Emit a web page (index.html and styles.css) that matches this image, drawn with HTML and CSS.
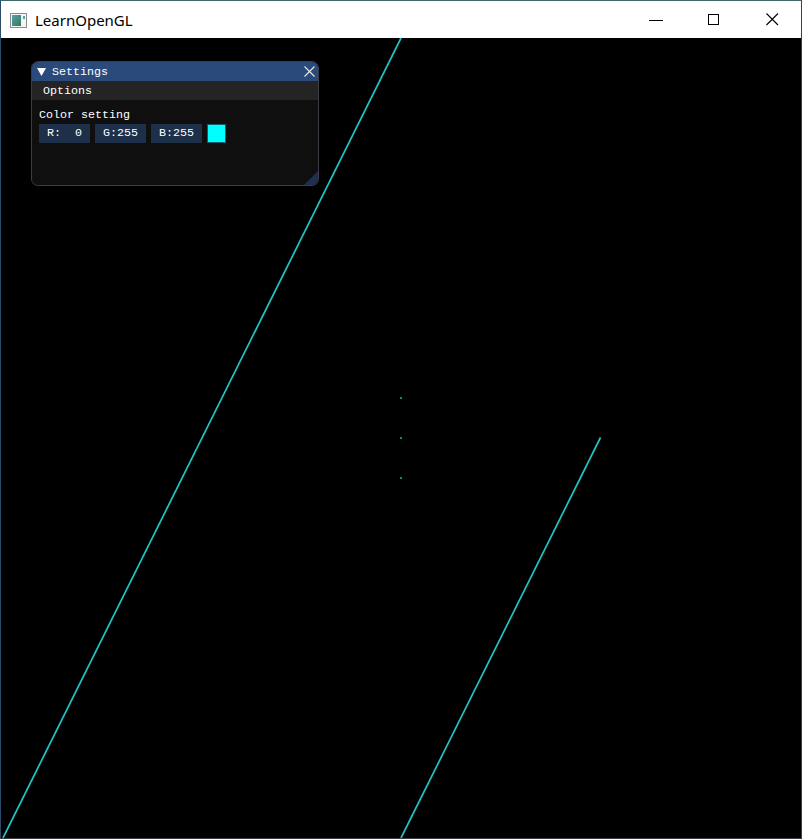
FILE: index.html
```html
<!DOCTYPE html>
<html>
<head>
<meta charset="utf-8">
<link rel="stylesheet" href="styles.css">
</head>
<body>
<div class="frame">
  <div class="titlebar">
    <svg class="app-icon" width="17" height="15" viewBox="0 0 17 15">
      <rect x="0.5" y="0.5" width="16" height="14" fill="#f4f4f4" stroke="#8c8c8c"/>
      <defs><linearGradient id="g" x1="0" y1="0" x2="1" y2="1"><stop offset="0" stop-color="#5aa0b0"/><stop offset="1" stop-color="#2f7a50"/></linearGradient></defs>
      <rect x="2" y="2" width="9" height="11" fill="url(#g)"/>
      <rect x="13" y="3" width="2" height="3" fill="#5aa0b0"/>
    </svg>
    <span class="title">LearnOpenGL</span>
    <div class="controls">
      <div class="ctl"><svg width="14" height="14" viewBox="0 0 14 14"><line x1="0" y1="7.5" x2="14" y2="7.5" stroke="#000" stroke-width="1"/></svg></div>
      <div class="ctl"><svg width="12" height="12" viewBox="0 0 12 12"><rect x="0.5" y="0.5" width="10" height="10" fill="none" stroke="#000" stroke-width="1"/></svg></div>
      <div class="ctl"><svg width="13" height="13" viewBox="0 0 13 13"><path d="M0.5 0.5 L12 12 M12 0.5 L0.5 12" stroke="#000" stroke-width="1.1" fill="none"/></svg></div>
    </div>
  </div>
  <div class="client">
    <svg class="gl" width="800" height="800" viewBox="0 0 800 800">
      <line x1="400" y1="0" x2="2" y2="800" stroke="#1fc6c6" stroke-width="1.7"/>
      <line x1="599.5" y1="399.5" x2="400" y2="800" stroke="#1fc6c6" stroke-width="1.7"/>
      <rect x="399" y="359" width="2" height="2" fill="#0b8a8a"/>
      <rect x="399" y="399" width="2" height="2" fill="#0b8a8a"/>
      <rect x="399" y="439" width="2" height="2" fill="#0b8a8a"/>
    </svg>
    <div class="imgui">
      <div class="im-title">
        <svg class="tri" width="9" height="8" viewBox="0 0 9 8"><polygon points="0,0 9,0 4.5,8" fill="#fff"/></svg>
        <span class="im-name">Settings</span>
        <svg class="im-close" width="11" height="11" viewBox="0 0 11 11"><path d="M0.5 0.5 L10.5 10.5 M10.5 0.5 L0.5 10.5" stroke="#e8e8e8" stroke-width="1.1"/></svg>
      </div>
      <div class="im-menu"><span class="menu-item">Options</span></div>
      <div class="im-body">
        <div class="label">Color setting</div>
        <div class="row">
          <div class="btn">R:&nbsp;&nbsp;0</div>
          <div class="btn">G:255</div>
          <div class="btn">B:255</div>
          <div class="swatch"></div>
        </div>
      </div>
      <div class="grip"></div>
    </div>
  </div>
</div>
</body>
</html>
```
FILE: styles.css
```css
html, body {
  margin: 0;
  padding: 0;
  background: #000;
}
.frame {
  width: 800px;
  height: 837px;
  border: 1px solid #3a3f4a;
  border-left-color: #2b4a6a;
  border-top-color: #3a6a6a;
  background: #000;
  display: flex;
  flex-direction: column;
}
.titlebar {
  height: 37px;
  background: #fff;
  display: flex;
  align-items: center;
  flex-shrink: 0;
}
.app-icon {
  margin-left: 9px;
  margin-top: 1px;
}
.title {
  margin-left: 8px;
  font-family: "Noto Sans", "Open Sans", sans-serif;
  font-size: 15px;
  color: #000;
  margin-top: 1px;
}
.controls {
  margin-left: auto;
  display: flex;
  height: 100%;
}
.ctl {
  width: 58px;
  height: 100%;
  display: flex;
  align-items: center;
  justify-content: center;
}
.client {
  position: relative;
  width: 800px;
  height: 800px;
  background: #000;
  overflow: hidden;
}
.gl {
  display: block;
}
.imgui {
  position: absolute;
  left: 30px;
  top: 23px;
  width: 286px;
  height: 123px;
  border: 1px solid #3c3c44;
  border-radius: 7px;
  background: #0f0f0f;
  overflow: hidden;
  font-family: "Liberation Mono", "DejaVu Sans Mono", monospace;
  font-size: 11.67px;
  line-height: 13px;
  color: #fff;
  display: flex;
  flex-direction: column;
}
.im-title {
  height: 19px;
  background: #294a7a;
  display: flex;
  align-items: center;
  padding-left: 5px;
  flex-shrink: 0;
}
.tri {
  display: block;
  margin-top: 1px;
}
.im-name {
  margin-left: 6px;
  padding-top: 2px;
}
.im-close {
  margin-left: auto;
  margin-right: 3px;
}
.im-menu {
  height: 19px;
  background: #242424;
  display: flex;
  align-items: center;
  flex-shrink: 0;
}
.menu-item {
  margin-left: 11px;
  padding-top: 1px;
}
.im-body {
  padding: 9px 7px 0 7px;
}
.label {
  height: 13px;
}
.row {
  display: flex;
  gap: 5px;
  margin-top: 2px;
}
.btn {
  height: 19px;
  line-height: 19px;
  width: 51px;
  text-align: center;
  background: #1d2f49;
  white-space: pre;
}
.swatch {
  width: 17px;
  height: 17px;
  background: #00ffff;
  border: 1px solid #0f5f6a;
}
.grip {
  position: absolute;
  right: 0;
  bottom: 0;
  width: 0;
  height: 0;
  border-left: 14px solid transparent;
  border-bottom: 14px solid #1c3050;
}
```
